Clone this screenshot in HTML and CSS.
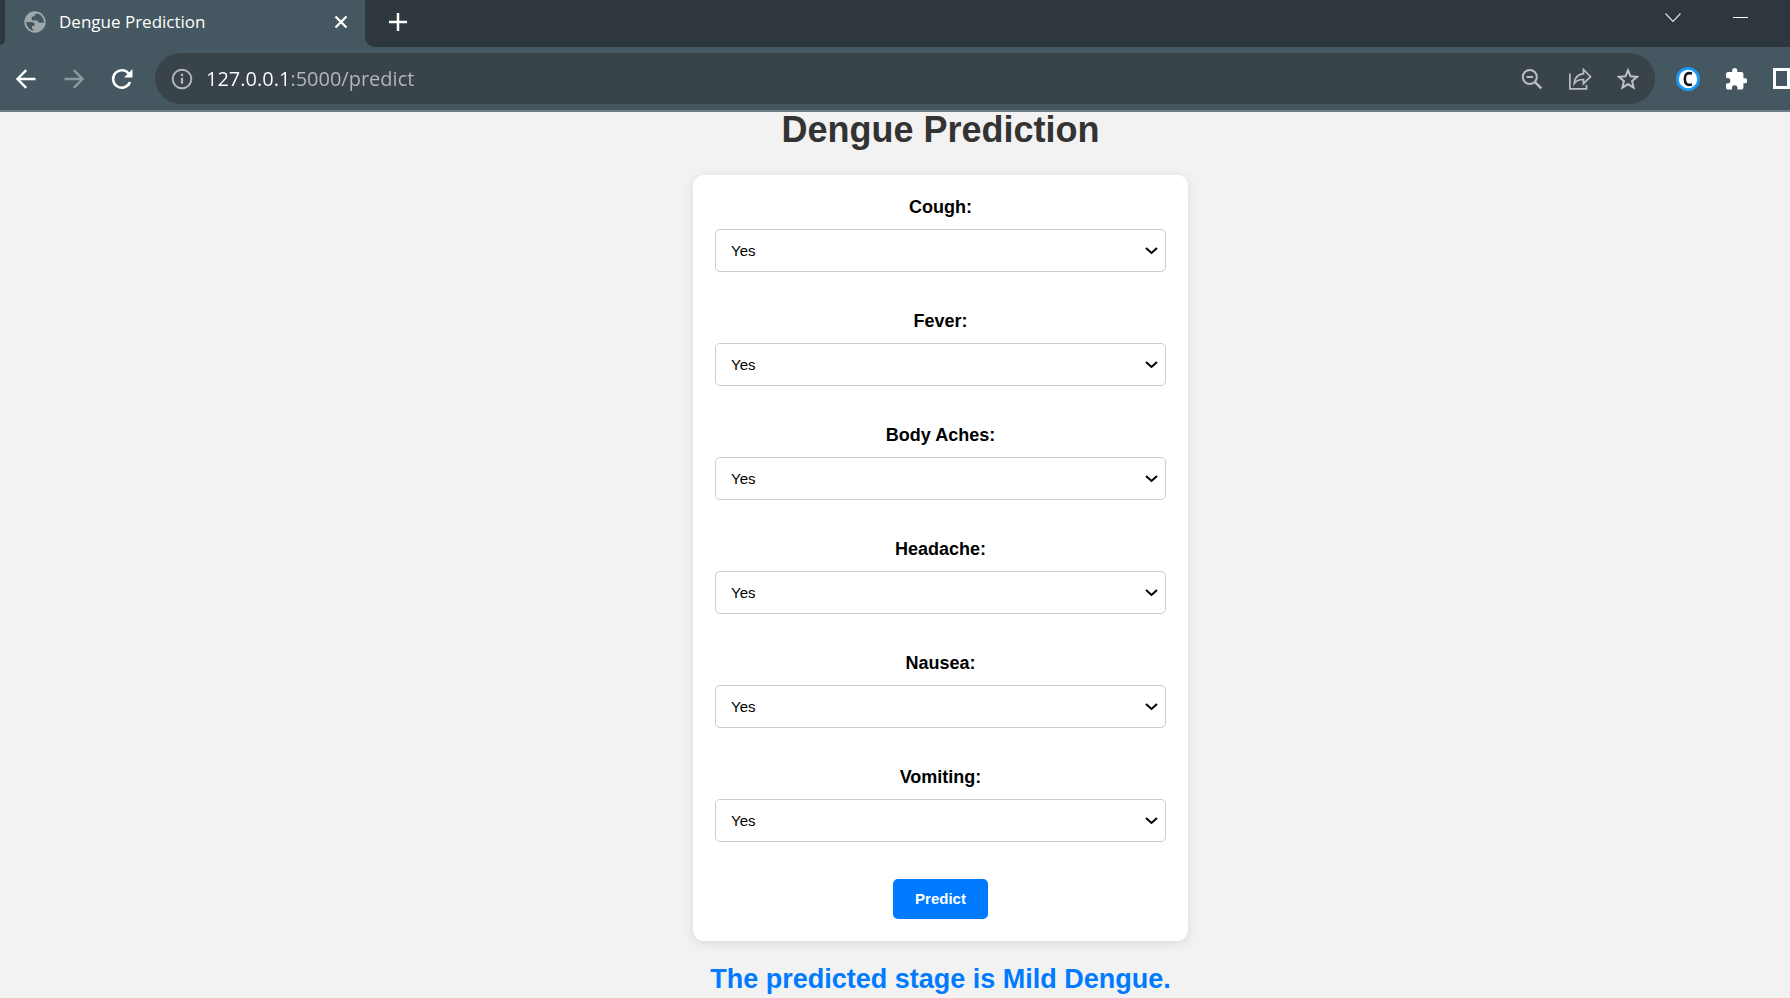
FILE: index.html
```html
<!DOCTYPE html>
<html lang="en">
<head>
<meta charset="utf-8">
<title>Dengue Prediction</title>
<link rel="stylesheet" href="styles.css">
</head>
<body>
<header class="browser">
  <div class="tab-strip">
    <div class="prev-tab"></div>
    <div class="tab">
      <svg class="globe" width="22" height="22" viewBox="0 0 22 22" aria-hidden="true"><circle cx="11" cy="11" r="9.8" fill="none" stroke="#a0a7ab" stroke-width="1.8"/><path d="M11 1.2C5 1.5 1.5 6 1.4 11h6.4c2 0 2.7 1 2.7 2.3v1.6H8v1.8c0 1 .7 1.7 1.6 1.7v2.2c6 .4 10.5-4 10.8-8.8h-4.5c-1.5 0-2.3-.9-2.3-2.2H9.8c-1.5 0-2.3-.8-2.3-2.1 0-1.500.9-2.200 2.200-2.200h1.200V4.500c0-1 .6-1.700 1.600-1.700h1.200z" fill="#a0a7ab"/></svg>
      <span class="tab-title">Dengue Prediction</span>
      <button class="icon-btn" aria-label="Close tab"><svg width="14" height="14" viewBox="0 0 14 14"><path d="M1.500 1.500l11 11M12.500 1.500l-11 11" stroke="#fff" stroke-width="2.300"/></svg></button>
    </div>
    <div class="strip-rest">
      <button class="icon-btn new-tab" aria-label="New tab"><svg width="18" height="18" viewBox="0 0 18 18"><path d="M9 0v18M0 9h18" stroke="#fff" stroke-width="2.500"/></svg></button>
      <div class="window-controls">
        <button class="icon-btn" aria-label="Search tabs"><svg width="16" height="10" viewBox="0 0 16 10"><path d="M.5.5L8 8.500 15.500.5" fill="none" stroke="#e3e6e7" stroke-width="1.100"/></svg></button>
        <button class="icon-btn" aria-label="Minimize"><svg width="16" height="10" viewBox="0 0 16 10"><path d="M0 4.500h15" stroke="#fff"/></svg></button>
      </div>
    </div>
  </div>
  <div class="toolbar">
    <button class="icon-btn" aria-label="Back"><svg width="20" height="20" viewBox="0 0 20 20"><path d="M19.500 10H2M10.200 1.200L1.400 10l8.800 8.800" fill="none" stroke="#fff" stroke-width="2.400"/></svg></button>
    <button class="icon-btn" aria-label="Forward"><svg width="20" height="20" viewBox="0 0 20 20"><path d="M.5 10H18M9.800 1.200l8.800 8.800-8.800 8.800" fill="none" stroke="#8d999e" stroke-width="2.400"/></svg></button>
    <button class="icon-btn" aria-label="Reload"><svg width="22" height="22" viewBox="0 0 22 22"><path d="M18.300 6.500A8.700 8.700 0 1 0 19 14" fill="none" stroke="#fff" stroke-width="2.500"/><path d="M21.500 1v8.500H13z" fill="#fff"/></svg></button>
    <div class="omnibox">
      <svg class="info" width="22" height="22" viewBox="0 0 22 22" aria-hidden="true"><circle cx="11" cy="11" r="9.300" fill="none" stroke="#b5babd" stroke-width="1.900"/><path d="M11 9.800v6M11 5.800v2.200" stroke="#b5babd" stroke-width="2.200"/></svg>
      <input class="url" type="text" aria-label="Address" value="127.0.0.1:5000/predict" spellcheck="false">
      <button class="icon-btn" aria-label="Zoom"><svg width="22" height="22" viewBox="0 0 22 22"><g fill="none" stroke="#b9bec0" stroke-width="2"><circle cx="8.800" cy="9" r="7"/><path d="M5.500 9h6.600"/><path d="M13.800 13.800l6.500 6.500" stroke-width="2.600"/></g></svg></button>
      <button class="icon-btn" aria-label="Share"><svg width="24" height="22" viewBox="0 0 24 22"><g fill="none" stroke="#b9bec0" stroke-width="1.700"><path d="M1.900 5.500v15.300h16.600v-4"/><path d="M15.500 1.500l7 7.200-7 7v-4.200c-4.500-.2-7 1-9.300 3.900.5-5.300 3.600-9 9.300-9.700z"/></g></svg></button>
      <button class="icon-btn" aria-label="Bookmark"><svg width="22" height="22" viewBox="0 0 22 22"><path d="M11 2.300l2.500 6 6.600.5-5 4.300 1.500 6.500L11 16.200l-5.600 3.400 1.500-6.500-5-4.300 6.600-.5z" fill="none" stroke="#c1c5c7" stroke-width="2"/></svg></button>
    </div>
    <button class="icon-btn" aria-label="Extension"><svg width="24" height="24" viewBox="0 0 24 24"><circle cx="12" cy="12" r="10.600" fill="#fff" stroke="#1a9af5" stroke-width="2.800"/><path d="M16 6.500c-5-1.300-7.200.8-7.200 5.500s2.200 6.800 7.200 5.500" fill="none" stroke="#14171f" stroke-width="2.600"/></svg></button>
    <button class="icon-btn" aria-label="Extensions"><svg width="22" height="22" viewBox="1 1 21.500 21.500"><path d="M20.500 11H19V7c0-1.100-.9-2-2-2h-4V3.500a2.500 2.500 0 0 0-5 0V5H4c-1.100 0-2 .9-2 2v3.800h1.500a2.700 2.700 0 0 1 0 5.400H2V20c0 1.100.9 2 2 2h3.800v-1.500a2.700 2.700 0 0 1 5.400 0V22H17c1.100 0 2-.9 2-2v-4h1.500a2.500 2.500 0 0 0 0-5z" fill="#fff"/></svg></button>
    <button class="icon-btn side-panel" aria-label="Side panel"><svg width="17" height="21" viewBox="0 0 17 21"><path d="M17 1.500H1.500v18H17" fill="none" stroke="#fff" stroke-width="3"/><path d="M14 0h3v21h-3z" fill="#fff"/></svg></button>
  </div>
</header>
<main class="page">
  <h1 class="title">Dengue Prediction</h1>
  <form class="card">
    <div class="fields">
      <div class="field"><label for="cough">Cough:</label><div class="select-wrap"><select id="cough"><option>Yes</option><option>No</option></select><svg class="arrow" width="13" height="8" viewBox="0 0 13 8"><path d="M1 1l5.500 5L12 1"/></svg></div></div>
      <div class="field"><label for="fever">Fever:</label><div class="select-wrap"><select id="fever"><option>Yes</option><option>No</option></select><svg class="arrow" width="13" height="8" viewBox="0 0 13 8"><path d="M1 1l5.500 5L12 1"/></svg></div></div>
      <div class="field"><label for="aches">Body Aches:</label><div class="select-wrap"><select id="aches"><option>Yes</option><option>No</option></select><svg class="arrow" width="13" height="8" viewBox="0 0 13 8"><path d="M1 1l5.500 5L12 1"/></svg></div></div>
      <div class="field"><label for="headache">Headache:</label><div class="select-wrap"><select id="headache"><option>Yes</option><option>No</option></select><svg class="arrow" width="13" height="8" viewBox="0 0 13 8"><path d="M1 1l5.500 5L12 1"/></svg></div></div>
      <div class="field"><label for="nausea">Nausea:</label><div class="select-wrap"><select id="nausea"><option>Yes</option><option>No</option></select><svg class="arrow" width="13" height="8" viewBox="0 0 13 8"><path d="M1 1l5.500 5L12 1"/></svg></div></div>
      <div class="field"><label for="vomiting">Vomiting:</label><div class="select-wrap"><select id="vomiting"><option>Yes</option><option>No</option></select><svg class="arrow" width="13" height="8" viewBox="0 0 13 8"><path d="M1 1l5.500 5L12 1"/></svg></div></div>
    </div>
    <button class="predict" type="button">Predict</button>
  </form>
  <h2 class="result">The predicted stage is Mild Dengue.</h2>
</main>
</body>
</html>
```
FILE: styles.css
```css
* { box-sizing: border-box; }

body {
  margin: 0;
  background: #f2f2f2;
  font-family: "Liberation Sans", Arial, sans-serif;
}

svg { display: block; flex: none; }

.icon-btn {
  display: grid;
  place-items: center;
  flex: none;
  width: 48px;
  height: 40px;
  padding: 0;
  border: 0;
  background: none;
}

/* Browser frame */
.browser {
  background: #455760;
  border-bottom: 2px solid #6d7e86;
  font-family: "Open Sans", "Noto Sans", sans-serif;
}

.tab-strip { display: flex; height: 47px; }

.prev-tab {
  width: 5px;
  height: 45px;
  background: #2d373d;
  border-bottom-right-radius: 8px;
}

.tab {
  display: flex;
  align-items: center;
  width: 360px;
  height: 44px;
  padding-left: 19px;
  gap: 13px;
}

.tab-title { flex: 1; color: #fff; font-size: 17px; line-height: 24px; }

.strip-rest {
  display: flex;
  flex: 1;
  justify-content: space-between;
  background: #2d373d;
  border-bottom-left-radius: 10px;
}

.new-tab { width: 66px; height: 44px; }

.window-controls { display: flex; gap: 20px; padding-right: 25px; }

.window-controls .icon-btn { height: 36px; }

.toolbar {
  display: flex;
  align-items: center;
  height: 63px;
  padding-left: 2px;
}

.side-panel { width: 30px; justify-items: end; }

.omnibox {
  display: flex;
  flex: 1;
  align-items: center;
  height: 51px;
  margin: 0 9px;
  padding: 0 3px 0 16px;
  border-radius: 26px;
  background: #39444a;
}

.url {
  flex: 1;
  min-width: 0;
  height: 32px;
  margin-left: 13px;
  padding: 0;
  border: 0;
  outline: 0;
  font: 20px/32px "Open Sans", "Noto Sans", sans-serif;
  color: transparent;
  caret-color: #fff;
  /* host in white, port and path in grey */
  background: linear-gradient(90deg, #fff 81px, #b3b9bc 81px);
  -webkit-background-clip: text;
  background-clip: text;
}

/* Page */
.page {
  display: flex;
  flex-direction: column;
  align-items: center;
  padding-left: 91px;
}

.title {
  margin: 0 0 27px;
  color: #333;
  font-size: 36px;
  line-height: 36px;
}

.card {
  display: flex;
  flex-direction: column;
  align-items: center;
  width: 495px;
  padding: 22px;
  border-radius: 11px;
  background: #fff;
  box-shadow: 0 2px 11px rgba(0, 0, 0, 0.1);
}

.fields { display: grid; gap: 39px; width: 100%; }

.field { display: grid; gap: 11px; }

.field label {
  font-size: 18px;
  font-weight: bold;
  line-height: 21px;
  text-align: center;
}

.select-wrap { display: grid; align-items: center; }

.select-wrap > * { grid-area: 1 / 1; }

.select-wrap select {
  appearance: none;
  width: 100%;
  height: 43px;
  padding: 0 15px;
  border: 1px solid #ccc;
  border-radius: 5px;
  background: #fff;
  color: #000;
  font: 15px/20px "Liberation Sans", Arial, sans-serif;
}

.arrow {
  justify-self: end;
  margin-right: 8px;
  pointer-events: none;
  fill: none;
  stroke: #000;
  stroke-width: 2;
}

.predict {
  height: 40px;
  margin-top: 37px;
  padding: 0 22px;
  border: 0;
  border-radius: 5px;
  background: #007bff;
  color: #fff;
  font: bold 15px/20px "Liberation Sans", Arial, sans-serif;
}

.result {
  margin: 23px 0 0;
  color: #007bff;
  font-size: 27px;
  line-height: 30px;
}
```
